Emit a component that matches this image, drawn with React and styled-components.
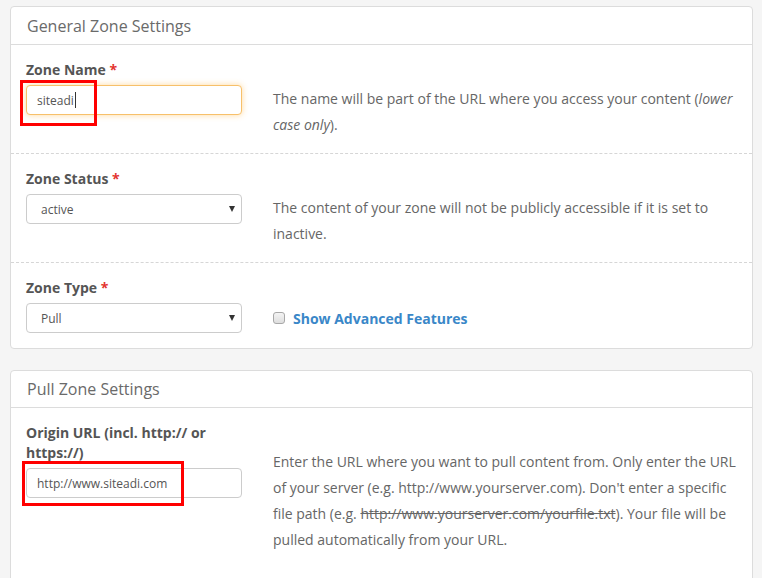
import React from "react";
import styled, { createGlobalStyle } from "styled-components";

const Global = createGlobalStyle`
  html, body { margin: 0; padding: 0; background: #f5f5f5; }
  body { font-family: "Open Sans", "Liberation Sans", sans-serif; color: #666; }
`;

const Page = styled.div`
  padding: 6px 9px 0 10px;
  display: flex;
  flex-direction: column;
  gap: 21px;
`;

const Panel = styled.section`
  background: #fff;
  border: 1px solid #dcdcdc;
  border-radius: 4px;
  overflow: hidden;
`;

const PanelHeader = styled.div`
  height: ${(p) => p.$h || 37}px;
  display: flex;
  align-items: center;
  padding: 0 16px;
  border-bottom: 1px solid #dcdcdc;
  font-size: 16px;
  color: #6a6a6a;
`;

const Row = styled.div`
  display: grid;
  grid-template-columns: 216px 1fr;
  column-gap: 31px;
  padding: 15px 16px ${(p) => p.$pb || 15}px 15px;
  border-top: ${(p) => (p.$first ? "none" : "1px dashed #d6d6d6")};
`;

const Field = styled.div`
  display: flex;
  flex-direction: column;
`;

const Label = styled.label`
  font-weight: 700;
  font-size: 14px;
  line-height: 20px;
  color: #555;
  margin-bottom: 5px;
`;

const Req = styled.span`
  color: #e3342f;
`;

const Control = styled.div`
  position: relative;
  height: 30px;
  box-sizing: border-box;
  border: 1px solid ${(p) => (p.$focus ? "#f7c06a" : "#ccc")};
  border-radius: 4px;
  box-shadow: ${(p) => (p.$focus ? "0 0 6px rgba(255, 170, 40, 0.45)" : "none")};
  background: #fff;
  display: flex;
  align-items: center;
  padding: 0 ${(p) => (p.$select ? 14 : 10)}px;
  font-size: 12px;
  color: #555;
`;

const Caret = styled.span`
  display: inline-block;
  width: 1px;
  height: 16px;
  background: #333;
  margin-left: 1px;
`;

const Arrow = styled.span`
  margin-left: auto;
  width: 0;
  height: 0;
  border-left: 3.5px solid transparent;
  border-right: 3.5px solid transparent;
  border-top: 6px solid #333;
  margin-right: -8px;
`;

const Mark = styled.span`
  position: absolute;
  left: ${(p) => p.$l}px;
  top: ${(p) => p.$t}px;
  width: ${(p) => p.$w}px;
  height: ${(p) => p.$h}px;
  box-sizing: border-box;
  border: 3px solid #f00;
  pointer-events: none;
`;

const Help = styled.p`
  margin: 26px 0 0;
  font-size: 14px;
  line-height: 26px;
  color: #666;
`;

const CheckWrap = styled.div`
  margin-top: 25px;
  height: 30px;
  display: flex;
  align-items: center;
  gap: 8px;
`;

const Box = styled.span`
  width: 12px;
  height: 12px;
  box-sizing: border-box;
  border: 1px solid #a8a8a8;
  border-radius: 3px;
  background: linear-gradient(#f4f4f4, #dedede);
`;

const CheckLabel = styled.span`
  font-size: 14px;
  font-weight: 700;
  color: #3a87c8;
`;

export default function App() {
  return (
    <>
      <Global />
      <Page>
        <Panel>
          <PanelHeader>General Zone Settings</PanelHeader>
          <Row $first>
            <Field>
              <Label>
                Zone Name <Req>*</Req>
              </Label>
              <Control $focus>
                siteadi
                <Caret />
                <Mark $l={-7} $t={-6} $w={77} $h={46} />
              </Control>
            </Field>
            <Help>
              The name will be part of the URL where you access your content (<i>lower case only</i>).
            </Help>
          </Row>
          <Row>
            <Field>
              <Label>
                Zone Status <Req>*</Req>
              </Label>
              <Control $select>
                active
                <Arrow />
              </Control>
            </Field>
            <Help>
              The content of your zone will not be publicly accessible if it is set to inactive.
            </Help>
          </Row>
          <Row>
            <Field>
              <Label>
                Zone Type <Req>*</Req>
              </Label>
              <Control $select>
                Pull
                <Arrow />
              </Control>
            </Field>
            <CheckWrap>
              <Box />
              <CheckLabel>Show Advanced Features</CheckLabel>
            </CheckWrap>
          </Row>
        </Panel>
        <Panel>
          <PanelHeader $h={36}>Pull Zone Settings</PanelHeader>
          <Row $first $pb={40}>
            <Field>
              <Label>Origin URL (incl. http:// or https://)</Label>
              <Control>
                http://www.siteadi.com
                <Mark $l={-5} $t={-8} $w={162} $h={45} />
              </Control>
            </Field>
            <Help>
              Enter the URL where you want to pull content from. Only enter the URL of your server (e.g.
              http://www.yourserver.com). Don't enter a specific file path (e.g.{" "}
              <s>http://www.yourserver.com/yourfile.txt</s>). Your file will be pulled automatically from
              your URL.
            </Help>
          </Row>
        </Panel>
      </Page>
    </>
  );
}
